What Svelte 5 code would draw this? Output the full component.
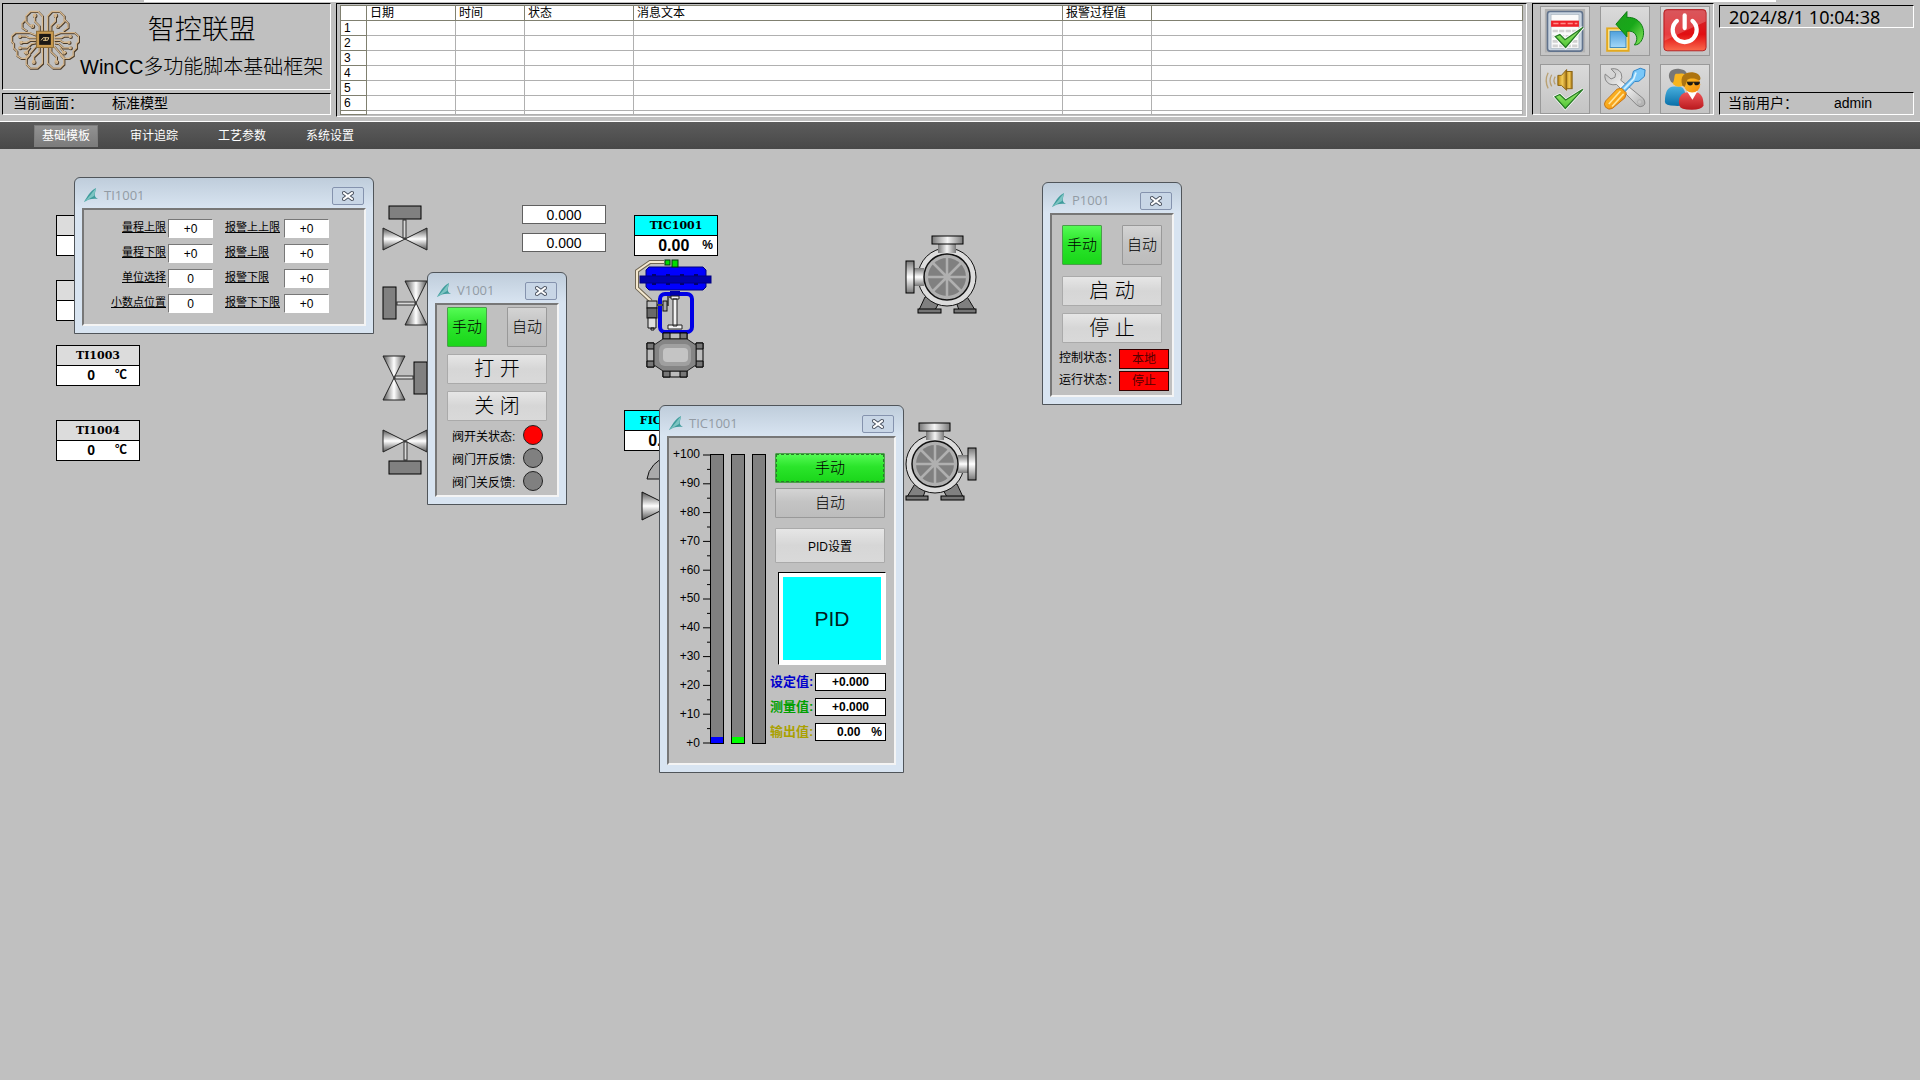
<script lang="ts">
	import type { Snippet } from 'svelte';

	type Mode = 'manual' | 'auto';

	const menu = ['基础模板', '审计追踪', '工艺参数', '系统设置'];
	const alarmRows = [1, 2, 3, 4, 5, 6];

	// the first two blocks lie under the TI1001 faceplate and stay blank
	const sensors = [
		{ tag: '', value: '', unit: '', x: 56, y: 66 },
		{ tag: '', value: '', unit: '', x: 56, y: 131 },
		{ tag: 'TI1003', value: '0', unit: '℃', x: 56, y: 196 },
		{ tag: 'TI1004', value: '0', unit: '℃', x: 56, y: 271 }
	];

	const controllers = [
		{ tag: 'TIC1001', x: 634, y: 66 },
		{ tag: 'FIC1001', x: 624, y: 261 }
	];

	const readouts = [
		{ id: 'out1', x: 522, y: 56 },
		{ id: 'out2', x: 522, y: 84 }
	];

	// angle turns the valve so that the actuator points up, left, right or down
	const valves = [
		{ x: 405, y: 90, angle: 0 },
		{ x: 416, y: 154, angle: -90 },
		{ x: 394, y: 229, angle: 90 },
		{ x: 405, y: 292, angle: 180 }
	];

	const limits = [
		{ id: 'range-hi', label: '量程上限', value: '+0' },
		{ id: 'alarm-hh', label: '报警上上限', value: '+0' },
		{ id: 'range-lo', label: '量程下限', value: '+0' },
		{ id: 'alarm-h', label: '报警上限', value: '+0' },
		{ id: 'unit', label: '单位选择', value: '0' },
		{ id: 'alarm-l', label: '报警下限', value: '+0' },
		{ id: 'decimals', label: '小数点位置', value: '0' },
		{ id: 'alarm-ll', label: '报警下下限', value: '+0' }
	];

	const scale = [100, 90, 80, 70, 60, 50, 40, 30, 20, 10, 0];
	const bars = [
		{ name: 'sp', fill: 2 },
		{ name: 'pv', fill: 2 },
		{ name: 'mv', fill: 0 }
	];
	const loopValues = [
		{ id: 'sp', label: '设定值:', value: '+0.000', unit: '' },
		{ id: 'pv', label: '测量值:', value: '+0.000', unit: '' },
		{ id: 'mv', label: '输出值:', value: '0.00', unit: '%' }
	];

	let activeMenu = $state('基础模板');
	let valveMode = $state<Mode>('manual');
	let pumpMode = $state<Mode>('manual');
	let loopMode = $state<Mode>('manual');
	let open = $state({ ti: true, valve: true, loop: true, pump: true });
</script>

{#snippet faceplate(key: 'ti' | 'valve' | 'loop' | 'pump', title: string, body: Snippet)}
	{#if open[key]}
		<section class="window window-{key}" aria-label={title}>
			<header class="title-bar">
				<svg class="app-icon" viewBox="0 0 14 15">
					<path d="M0 14 C3 9 6 3 12 0 L11 5 C10 8 12 10 14 11 C9 10 4 11 0 14Z" fill="#3f9c9c" />
					<path d="M0 14 C5 9 8 5 12 0 L10 8 Z" fill="#7cc4c2" />
				</svg>
				<h2>{title}</h2>
				<button class="close" aria-label="关闭窗口" onclick={() => (open[key] = false)}>
					<svg viewBox="0 0 12 10">
						<path d="M2 2 L10 8 M10 2 L2 8" stroke="#4a5260" stroke-width="4" stroke-linecap="square" />
						<path d="M2 2 L10 8 M10 2 L2 8" stroke="#fff" stroke-width="2" stroke-linecap="square" />
					</svg>
				</button>
			</header>
			<div class="window-body">{@render body()}</div>
		</section>
	{/if}
{/snippet}

{#snippet valve()}
	<path d="M-22 -11 L0 0 L-22 11Z M22 -11 L0 0 L22 11Z" fill="url(#steel)" stroke="#222" />
	<rect x="-2" y="-19" width="3" height="18" fill="#d8d8d8" stroke="#333" />
	<rect x="-16" y="-33" width="32" height="13" fill="#808080" stroke="#000" />
{/snippet}

{#snippet pump()}
	<path d="M20 62 L14 75 H30 L36 64Z M50 64 L54 75 H70 L61 60Z" fill="#808080" stroke="#111" />
	<rect x="13" y="74" width="23" height="4" fill="#757575" stroke="#000" />
	<rect x="49" y="74" width="22" height="4" fill="#757575" stroke="#000" />
	<circle cx="42" cy="42" r="29" fill="#dcdcdc" stroke="#111" />
	<rect x="33" y="9" width="18" height="9" fill="url(#flange)" />
	<rect x="9" y="33" width="10" height="18" fill="url(#flange-side)" />
	<rect x="27" y="1" width="31" height="8" fill="url(#flange)" stroke="#000" />
	<rect x="1" y="26" width="8" height="32" fill="url(#flange-side)" stroke="#000" />
	<circle cx="42" cy="42" r="23" fill="#b0b0b0" stroke="#111" stroke-width="1.5" />
	<circle cx="42" cy="42" r="19" fill="#808080" />
	<path d="M42 22 V62 M22 42 H62 M28 28 L56 56 M56 28 L28 56" stroke="#b0b0b0" stroke-width="2.5" />
{/snippet}

{#snippet limitPanel()}
	<div class="limits">
		{#each limits as item (item.id)}
			<label for={item.id}>{item.label}</label>
			<input id={item.id} value={item.value} />
		{/each}
	</div>
{/snippet}

{#snippet valvePanel()}
	<div class="commands valve-commands">
		<div class="modes">
			<button class="mode" class:on={valveMode === 'manual'} onclick={() => (valveMode = 'manual')}>手动</button>
			<button class="mode" class:on={valveMode === 'auto'} onclick={() => (valveMode = 'auto')}>自动</button>
		</div>
		<button class="action">打 开</button>
		<button class="action">关 闭</button>
	</div>
	<ul class="lamps">
		<li>阀开关状态: <span class="lamp red"></span></li>
		<li>阀门开反馈: <span class="lamp"></span></li>
		<li>阀门关反馈: <span class="lamp"></span></li>
	</ul>
{/snippet}

{#snippet pumpPanel()}
	<div class="commands pump-commands">
		<div class="modes">
			<button class="mode" class:on={pumpMode === 'manual'} onclick={() => (pumpMode = 'manual')}>手动</button>
			<button class="mode" class:on={pumpMode === 'auto'} onclick={() => (pumpMode = 'auto')}>自动</button>
		</div>
		<button class="action">启 动</button>
		<button class="action">停 止</button>
	</div>
	<dl class="states">
		<dt>控制状态：</dt>
		<dd>本地</dd>
		<dt>运行状态：</dt>
		<dd>停止</dd>
	</dl>
{/snippet}

{#snippet loopPanel()}
	<div class="loop">
		<div class="gauge">
			<ol class="scale">
				{#each scale as step (step)}
					<li>+{step}</li>
				{/each}
			</ol>
			<svg class="ticks" viewBox="0 0 7 290" preserveAspectRatio="none">
				{#each scale as step (step)}
					<path d="M0 {289 - step * 2.88} H7" stroke="#000" />
					{#if step > 0}
						<path d="M4 {289 - (step - 5) * 2.88} H7" stroke="#000" />
					{/if}
				{/each}
			</svg>
			<div class="bars">
				{#each bars as bar (bar.name)}
					<div class="bar"><div class="fill {bar.name}" style="height: {bar.fill}%"></div></div>
				{/each}
			</div>
		</div>
		<div class="loop-side">
			<button class="wide focused" class:on={loopMode === 'manual'} onclick={() => (loopMode = 'manual')}>手动</button>
			<button class="wide" class:on={loopMode === 'auto'} onclick={() => (loopMode = 'auto')}>自动</button>
			<button class="wide setup">PID设置</button>
			<div class="pid-box">PID</div>
			<div class="loop-values">
				{#each loopValues as item (item.id)}
					<label class={item.id} for="loop-{item.id}">{item.label}</label>
					<span class="value-box" class:with-unit={item.unit}>
						<input id="loop-{item.id}" value={item.value} />{item.unit}
					</span>
				{/each}
			</div>
		</div>
	</div>
{/snippet}

{#snippet brainHalf()}
	<path d="M128 95 V46 L115 32 H91 L77 46 V63 L90 76 H97" />
	<path d="M118 94 V76 L104 62 V40 M77 56 L65 68 V82 L80 92" />
	<path d="M108 105 L88 97 H45 L33 108 V125 L39 131 V145 L49 155 V168 L62 177 H75 L92 158 L108 139" />
	<path d="M108 113 H86 L77 108 H56 M108 121 H90 L80 127 H61" />
	<path d="M107 129 L94 131 L80 144 H56 M90 142 L78 158 H70" />
	<path d="M90 164 L78 178 V195 L90 207 H112 L128 192 V142" />
	<path d="M118 142 V156 L101 172 V190" />
	<circle cx="104" cy="44" r="4" /><circle cx="97" cy="77" r="4" /><circle cx="58" cy="109" r="3" />
	<circle cx="62" cy="127" r="3" /><circle cx="58" cy="144" r="3" /><circle cx="78" cy="159" r="4" />
	<circle cx="101" cy="188" r="4" />
{/snippet}

<div class="screen">
	<header class="top">
		<div class="brand-column">
			<div class="brand sunken">
				<svg class="logo" viewBox="28 26 216 188">
					<g class="brain shade" transform="translate(2 2)">
						{@render brainHalf()}
						<g transform="translate(272 0) scale(-1 1)">{@render brainHalf()}</g>
					</g>
					<g class="brain">
						{@render brainHalf()}
						<g transform="translate(272 0) scale(-1 1)">{@render brainHalf()}</g>
					</g>
					<rect x="110" y="93" width="52" height="50" fill="#c99a4e" stroke="#8a6a35" stroke-width="3" />
					<rect x="118" y="101" width="36" height="34" fill="#1c1915" />
					<path d="M124 121 L130 113 H148 L144 121 H130 M137 112 V122" stroke="#e8c98c" stroke-width="3" fill="none" />
				</svg>
				<div class="brand-text">
					<h1>智控联盟</h1>
					<p>WinCC多功能脚本基础框架</p>
				</div>
			</div>
			<div class="current sunken"><span>当前画面：</span><span>标准模型</span></div>
		</div>

		<div class="alarms sunken">
			<table>
				<colgroup>
					<col class="c-no" /><col class="c-date" /><col class="c-time" /><col class="c-state" />
					<col class="c-text" /><col class="c-value" /><col />
				</colgroup>
				<thead>
					<tr>
						<th></th><th>日期</th><th>时间</th><th>状态</th><th>消息文本</th><th>报警过程值</th><th></th>
					</tr>
				</thead>
				<tbody>
					{#each alarmRows as no (no)}
						<tr><td>{no}</td><td></td><td></td><td></td><td></td><td></td><td></td></tr>
					{/each}
					<tr class="rest"><td></td><td></td><td></td><td></td><td></td><td></td><td></td></tr>
				</tbody>
			</table>
		</div>

		<div class="tools sunken">
			<button aria-label="报警确认">
				<svg viewBox="0 0 148 148">
					<rect x="12" y="6" width="124" height="134" fill="#b3b3b3" />
					<rect x="20" y="14" width="108" height="122" rx="8" fill="#c8d3df" stroke="#61738d" stroke-width="5" />
					<rect x="31" y="23" width="86" height="105" fill="#fafafa" stroke="#a7b2be" stroke-width="2" />
					<path d="M36 74 H112 M36 90 H112 M36 106 H112 M36 120 H112" stroke="#d2d2d2" stroke-width="8" />
					<path d="M54 68 V126 M74 68 V126 M94 68 V126" stroke="#fafafa" stroke-width="4" />
					<rect x="31" y="42" width="86" height="19" fill="#ee2028" />
					<path d="M38 51 H54 M60 51 H76 M82 51 H98 M104 51 H112" stroke="#ff8b88" stroke-width="5" />
					<path d="M44 91 L58 85 L74 101 L129 63 L76 125Z" fill="#72d84d" stroke="#fff" stroke-width="9" />
					<path d="M44 91 L58 85 L74 101 L129 63 L76 125Z" fill="url(#check)" stroke="#267a24" stroke-width="4" />
				</svg>
			</button>
			<button aria-label="画面返回">
				<svg viewBox="0 0 148 148">
					<rect x="19" y="66" width="66" height="69" fill="#ffe89a" stroke="#e3a91e" stroke-width="6" />
					<rect x="28" y="75" width="49" height="50" fill="url(#sky)" stroke="#3c88bd" stroke-width="3" />
					<path d="M46 53 L80 14 V32 C120 30 138 66 129 94 C123 112 113 117 103 117 C120 96 106 70 80 75 V92Z" fill="url(#leaf)" stroke="#0c7a13" stroke-width="3" />
				</svg>
			</button>
			<button aria-label="退出">
				<svg viewBox="0 0 148 148">
					<rect x="9" y="8" width="130" height="127" rx="10" fill="url(#power)" stroke="#b42326" stroke-width="3" />
					<path d="M11 18 Q12 9 20 10 H128 Q138 10 138 22 V45 Q78 72 11 104Z" fill="#fff" opacity=".2" />
					<path d="M49 43 A37 37 0 1 0 97 43" fill="none" stroke="#fff" stroke-width="13" stroke-linecap="round" />
					<path d="M73 26 V65" stroke="#fff" stroke-width="13" stroke-linecap="round" />
				</svg>
			</button>
			<button aria-label="消音">
				<svg viewBox="0 0 148 148">
					<path d="M22 24 Q10 48 22 72 M33 30 Q23 48 33 66 M44 36 Q36 48 44 60" fill="none" stroke="#b9a173" stroke-width="4" />
					<path d="M52 32 H63 L79 14 V78 L63 63 H52Z" fill="url(#brass)" stroke="#8a6415" stroke-width="3" />
					<rect x="78" y="20" width="18" height="53" fill="url(#brass)" stroke="#8a6415" stroke-width="3" />
					<path d="M43 98 L58 91 L76 108 L129 75 L75 134Z" fill="#fff" stroke="#fff" stroke-width="8" />
					<path d="M43 98 L58 91 L76 108 L129 75 L75 134Z" fill="url(#check)" stroke="#267a24" stroke-width="4" />
				</svg>
			</button>
			<button aria-label="工具">
				<svg viewBox="0 0 148 148">
					<path d="M31 12 Q52 8 62 25 Q67 39 61 47 L131 104 Q140 120 130 126 Q121 133 110 123 L48 60 Q24 65 14 46 Q10 35 13 28 L31 43 L43 38 L45 27Z" fill="url(#wrench)" stroke="#858585" stroke-width="3" />
					<circle cx="119" cy="114" r="7" fill="#c6c6c6" stroke="#999" />
					<path d="M61 73 L95 39 L100 19 L121 10 L136 15 L134 35 L117 50 L104 51 L73 83Z" fill="#79c7f8" stroke="#2c83c5" stroke-width="3" />
					<path d="M71 74 L101 43 L108 23" stroke="#d8f3ff" stroke-width="5" fill="none" />
					<path d="M50 74 L64 72 L78 86 L74 101 L35 134 Q24 140 14 130 Q7 121 14 111Z" fill="url(#orange)" stroke="#c57518" stroke-width="3" />
					<path d="M24 120 L60 80 M34 128 L70 89" stroke="#ffe49a" stroke-width="5" />
				</svg>
			</button>
			<button aria-label="用户登录">
				<svg viewBox="0 0 148 148">
					<path d="M12 113 Q12 64 42 66 H59 Q79 71 76 113 Q70 129 43 126 Q12 125 12 113Z" fill="url(#blue-coat)" />
					<circle cx="55" cy="44" r="23" fill="#f8b51e" />
					<path d="M28 46 C15 20 39 8 58 12 C77 15 82 25 78 31 C66 23 54 28 46 27 C40 29 42 48 37 55 Q31 56 28 46Z" fill="#777" />
					<path d="M55 114 Q56 84 84 84 H104 Q132 84 131 126 Q124 138 95 138 Q59 138 57 126Z" fill="url(#red-coat)" />
					<path d="M80 81 L97 107 L113 80Z" fill="#fff" />
					<circle cx="96" cy="60" r="25" fill="url(#orange)" />
					<path d="M66 64 C55 29 80 20 101 23 C119 26 126 40 119 48 C104 38 88 41 82 45 L73 68Z" fill="#ad7410" />
					<path d="M80 53 H120" stroke="#161616" stroke-width="3" />
					<path d="M80 53 H98 V59 Q90 68 82 59Z M102 53 H119 V58 Q110 67 103 59Z" fill="#161616" />
				</svg>
			</button>
		</div>

		<div class="session">
			<time class="clock sunken" datetime="2024-08-01T10:04:38">2024/8/1 10:04:38</time>
			<div class="user sunken"><span>当前用户：</span><span>admin</span></div>
		</div>
	</header>

	<nav>
		{#each menu as item (item)}
			<button class:active={activeMenu === item} onclick={() => (activeMenu = item)}>{item}</button>
		{/each}
	</nav>

	<main>
		<svg class="process" width="1000" height="380" viewBox="0 0 1000 380">
			<defs>
				<linearGradient id="steel" x1="0" y1="0" x2="0" y2="1">
					<stop offset="0" stop-color="#555" /><stop offset=".5" stop-color="#fff" /><stop offset="1" stop-color="#555" />
				</linearGradient>
				<linearGradient id="flange" x1="0" y1="0" x2="1" y2="0">
					<stop offset="0" stop-color="#777" /><stop offset=".5" stop-color="#f4f4f4" /><stop offset="1" stop-color="#777" />
				</linearGradient>
				<linearGradient id="flange-side" x1="0" y1="0" x2="0" y2="1">
					<stop offset="0" stop-color="#777" /><stop offset=".5" stop-color="#fff" /><stop offset="1" stop-color="#777" />
				</linearGradient>
				<linearGradient id="check" x1="0" y1="0" x2="0" y2="1">
					<stop offset="0" stop-color="#a9f07c" /><stop offset="1" stop-color="#4cc431" />
				</linearGradient>
				<linearGradient id="sky" x1="0" y1="0" x2="0" y2="1">
					<stop offset="0" stop-color="#4fa0dc" /><stop offset="1" stop-color="#a4d8f8" />
				</linearGradient>
				<linearGradient id="leaf" x1="0" y1="0" x2="1" y2="1">
					<stop offset="0" stop-color="#1d9f1c" /><stop offset=".5" stop-color="#18a819" /><stop offset="1" stop-color="#8de85f" />
				</linearGradient>
				<linearGradient id="power" x1="0" y1="0" x2="0" y2="1">
					<stop offset="0" stop-color="#cf2e35" /><stop offset=".6" stop-color="#e20e12" /><stop offset="1" stop-color="#fa6a4c" />
				</linearGradient>
				<linearGradient id="brass" x1="0" y1="0" x2="1" y2="0">
					<stop offset="0" stop-color="#b98414" /><stop offset=".5" stop-color="#f3cd5a" /><stop offset="1" stop-color="#a87312" />
				</linearGradient>
				<linearGradient id="wrench" x1="0" y1="0" x2="1" y2="1">
					<stop offset="0" stop-color="#bcbcbc" /><stop offset=".5" stop-color="#f6f6f6" /><stop offset="1" stop-color="#aaa" />
				</linearGradient>
				<linearGradient id="orange" x1="0" y1="0" x2="1" y2="1">
					<stop offset="0" stop-color="#ffc52a" /><stop offset="1" stop-color="#f28a0c" />
				</linearGradient>
				<linearGradient id="blue-coat" x1="0" y1="0" x2="0" y2="1">
					<stop offset="0" stop-color="#49b0df" /><stop offset="1" stop-color="#096fa8" />
				</linearGradient>
				<linearGradient id="red-coat" x1="0" y1="0" x2="0" y2="1">
					<stop offset="0" stop-color="#ef5558" /><stop offset="1" stop-color="#b9181d" />
				</linearGradient>
			</defs>

			{#each valves as v}
				<g transform="translate({v.x} {v.y}) rotate({v.angle})">{@render valve()}</g>
			{/each}

			<!-- pneumatic control valve -->
			<g transform="translate(634 109)">
				<path d="M30 4 H16 L3 13 V30 L17 43" fill="none" stroke="#6f6654" stroke-width="4" />
				<path d="M30 4 H16 L3 13 V30 L17 43" fill="none" stroke="#f4e8cf" stroke-width="2" />
				<rect x="26" y="36" width="32" height="38" rx="5" fill="none" stroke="#0000e6" stroke-width="4" />
				<path d="M23 47 H34 V39 H39" fill="none" stroke="#555" stroke-width="2" />
				<rect x="29" y="43" width="4" height="10" fill="#aaa" stroke="#111" />
				<rect x="13" y="43" width="10" height="7" fill="#bbb" stroke="#111" />
				<rect x="13" y="50" width="10" height="10" fill="#696969" stroke="#111" />
				<path d="M14 60 H22 V70 H14Z M17 70 H20 V72 H17Z" fill="#ddd" stroke="#111" />
				<path d="M15 9 H69 L72 12 V29 L69 32 H15 L12 29 V12Z" fill="#00f" stroke="#000080" />
				<rect x="6" y="18" width="71" height="7" fill="#0000a8" stroke="#000080" />
				<path d="M18 17 h4 M32 17 h4 M46 17 h4 M60 17 h4 M18 26 h4 M32 26 h4 M46 26 h4 M60 26 h4" stroke="#000070" stroke-width="2" />
				<rect x="31" y="2" width="5" height="5" fill="#0d0" stroke="#031" />
				<rect x="38" y="2" width="6" height="7" fill="#0d0" stroke="#031" />
				<rect x="36" y="33" width="10" height="5" fill="#0000b0" />
				<path d="M37 38 H45 V41 H37Z M39 41 H43 V68 H39Z M34 67 H48 V71 H34Z" fill="#f2f2f2" stroke="#222" />
				<path d="M29 75 H53 V81 H29Z M29 113 H53 V119 H29Z M13 85 H20 V109 H13Z M62 85 H69 V109 H62Z" fill="#bdbdbd" stroke="#000" />
				<path d="M29 75 h7 v6 h-7z M46 75 h7 v6 h-7z M29 113 h7 v6 h-7z M46 113 h7 v6 h-7z M13 85 h7 v6 h-7z M13 103 h7 v6 h-7z M62 85 h7 v6 h-7z M62 103 h7 v6 h-7z" fill="#777" stroke="#000" />
				<path d="M29 81 H53 L62 87 V107 L53 113 H29 L20 107 V87Z" fill="#858585" stroke="#222" />
				<rect x="25" y="86" width="32" height="22" rx="6" fill="#a0a0a0" />
				<rect x="29" y="90" width="25" height="14" rx="4" fill="#c4c4c4" />
			</g>

			<!-- flow control valve -->
			<path d="M647 330 Q649 314 670 305 Q690 314 692 330Z" fill="#aaa" stroke="#111" />
			<path d="M642 343 L670 357 L642 371Z" fill="url(#steel)" stroke="#111" />

			<g transform="translate(905 86)">{@render pump()}</g>
			<g transform="translate(977 273) scale(-1 1)">{@render pump()}</g>
		</svg>

		{#each sensors as s}
			<div class="tag sensor" style="left: {s.x}px; top: {s.y}px">
				<h3>{s.tag}</h3>
				<p><b>{s.value}</b><span>{s.unit}</span></p>
			</div>
		{/each}

		{#each controllers as c (c.tag)}
			<div class="tag controller" style="left: {c.x}px; top: {c.y}px">
				<h3>{c.tag}</h3>
				<p><b>0.00</b><span>%</span></p>
			</div>
		{/each}

		{#each readouts as r (r.id)}
			<input class="readout" aria-label={r.id} value="0.000" style="left: {r.x}px; top: {r.y}px" />
		{/each}

		{@render faceplate('ti', 'TI1001', limitPanel)}
		{@render faceplate('valve', 'V1001', valvePanel)}
		{@render faceplate('loop', 'TIC1001', loopPanel)}
		{@render faceplate('pump', 'P1001', pumpPanel)}
	</main>
</div>

<style>
	:global(body) {
		background: #c0c0c0;
	}

	.screen {
		display: flex;
		flex-direction: column;
		min-height: 100vh;
		background: #c0c0c0;
		color: #000;
		font-family: 'Liberation Sans', 'Noto Sans CJK SC', sans-serif;
		font-size: 12px;
	}

	.screen *,
	.screen {
		box-sizing: border-box;
	}

	h1,
	h2,
	h3,
	p,
	ul,
	ol,
	dl,
	dd {
		margin: 0;
		padding: 0;
		font-weight: inherit;
		list-style: none;
	}

	button,
	input {
		margin: 0;
		padding: 0;
		color: inherit;
		font-family: inherit;
		border-radius: 0;
	}

	.sunken {
		border: 1px solid;
		border-color: #000 #fff #fff #000;
	}

	/* Header */
	.top {
		display: grid;
		grid-template-columns: 329px 1fr 182px 195px;
		gap: 5px;
		padding: 3px 6px 4px 2px;
		background: linear-gradient(#fff, #fff) 144px 0 / calc(100% - 288px) 2px no-repeat;
	}

	.brand-column {
		display: flex;
		flex-direction: column;
		gap: 3px;
	}

	.brand {
		display: flex;
		height: 87px;
		font-weight: 300;
	}

	.logo {
		flex: none;
		width: 70px;
		height: 64px;
		margin: 4px 0 0 7px;
	}

	.brain {
		fill: none;
		stroke: #d6b88f;
		stroke-width: 4;
	}

	.brain.shade {
		stroke: #4a3a28;
		stroke-width: 6;
	}

	.brand-text {
		text-align: center;
		white-space: nowrap;
	}

	h1 {
		padding-top: 8px;
		font-size: 27px;
		line-height: 36px;
	}

	.brand-text p {
		font-size: 20px;
		line-height: 38px;
	}

	.current {
		display: flex;
		gap: 29px;
		height: 22px;
		padding-left: 10px;
		font-size: 14px;
		line-height: 18px;
	}

	.alarms {
		padding: 1px 3px;
	}

	table {
		width: 100%;
		table-layout: fixed;
		border-collapse: collapse;
		border: 1px solid #808070;
		background: #fff;
	}

	.c-no { width: 26px; }
	.c-date { width: 89px; }
	.c-time { width: 69px; }
	.c-state { width: 109px; }
	.c-text { width: 429px; }
	.c-value { width: 89px; }

	th,
	td {
		height: 15px;
		padding: 0 0 0 3px;
		border: 1px solid #b0b0b0;
		font-weight: inherit;
		font-size: 12px;
		line-height: 14px;
		text-align: left;
		white-space: nowrap;
	}

	th,
	td:first-child {
		border-color: #808070;
	}

	.rest td {
		height: 4px;
	}

	.tools {
		display: grid;
		grid-template-columns: repeat(3, 50px);
		grid-auto-rows: 50px;
		gap: 8px 10px;
		align-self: start;
		padding: 2px 0 0 7px;
	}

	.tools button {
		border: 1px solid #999;
		background: linear-gradient(#dadada, #c4c4c4);
	}

	.tools svg {
		display: block;
		width: 48px;
		height: 48px;
	}

	.session {
		display: flex;
		flex-direction: column;
		justify-content: space-between;
		padding: 2px 0;
	}

	.clock {
		height: 23px;
		padding-left: 9px;
		font-family: 'Noto Sans', sans-serif;
		font-size: 18px;
		line-height: 22px;
	}

	.user {
		display: flex;
		gap: 36px;
		height: 23px;
		padding-left: 8px;
		font-size: 14px;
		line-height: 20px;
	}

	/* Menu */
	nav {
		display: flex;
		gap: 24px;
		padding: 3px 34px 2px;
		border-top: 1px solid #fff;
		background: linear-gradient(#5c5c5c, #484848);
	}

	nav button {
		height: 22px;
		padding: 0 7px;
		border: 1px solid transparent;
		background: none;
		color: #fff;
		font-size: 12px;
		line-height: 20px;
	}

	nav button.active {
		border-color: #7d7d7d;
		background: linear-gradient(#929292, #7c7c7c);
	}

	/* Process picture */
	main {
		position: relative;
		flex: 1;
	}

	.process {
		position: absolute;
		top: 0;
		left: 0;
	}

	.tag {
		position: absolute;
		width: 84px;
		border: 1px solid #000;
		background: #fff;
	}

	.tag h3 {
		min-height: 20px;
		border-bottom: 1px solid #000;
		background: #dcdcdc;
		font-family: 'DejaVu Serif', serif;
		font-size: 11px;
		font-weight: bold;
		line-height: 19px;
		text-align: center;
	}

	.tag.controller h3 {
		background: #0ff;
	}

	.tag p {
		display: flex;
		justify-content: flex-end;
		gap: 20px;
		min-height: 19px;
		padding-right: 12px;
		font-size: 14px;
		font-weight: bold;
		line-height: 19px;
	}

	.tag.controller p {
		gap: 13px;
		padding-right: 4px;
		font-size: 16px;
	}

	.tag p span {
		font-size: 12px;
	}

	.readout {
		position: absolute;
		width: 84px;
		height: 19px;
		border: 1px solid #606060;
		background: #fff;
		font-size: 14px;
		text-align: center;
	}

	/* Faceplate windows */
	.window {
		position: absolute;
		padding: 0 7px 7px;
		border: 1px solid #50555a;
		border-radius: 6px 6px 0 0;
		background: linear-gradient(#bfcddb, #d8e4f1 30px);
	}

	.window-ti {
		top: 28px;
		left: 74px;
		width: 300px;
	}

	.window-valve {
		top: 123px;
		left: 427px;
		width: 140px;
	}

	.window-loop {
		top: 256px;
		left: 659px;
		width: 245px;
	}

	.window-pump {
		top: 33px;
		left: 1042px;
		width: 140px;
	}

	.title-bar {
		display: flex;
		align-items: center;
		gap: 6px;
		height: 30px;
		padding: 5px 2px 0;
	}

	.app-icon {
		width: 14px;
		height: 15px;
	}

	h2 {
		flex: 1;
		color: #929ba4;
		font-family: 'Open Sans', sans-serif;
		font-size: 13px;
		line-height: 17px;
	}

	.close {
		display: flex;
		align-items: center;
		justify-content: center;
		width: 32px;
		height: 18px;
		border: 1px solid #8593ae;
		border-radius: 2px;
		background: #c8d6e6;
	}

	.close svg {
		width: 12px;
		height: 10px;
	}

	.window-body {
		border: 2px solid;
		border-color: #777 #f4f4f4 #f4f4f4 #777;
		background: #c0c0c0;
	}

	.limits {
		display: grid;
		grid-template-columns: 84px 45px 71px 45px;
		gap: 6px 0;
		padding: 9px 0 11px;
		font-size: 11px;
		line-height: 17px;
	}

	.limits label {
		text-decoration: underline;
		white-space: nowrap;
	}

	.limits label:nth-of-type(odd) {
		padding-right: 2px;
		text-align: right;
	}

	.limits label:nth-of-type(even) {
		padding-left: 12px;
	}

	.limits input {
		width: 45px;
		height: 19px;
		border: 1px solid;
		border-color: #777 #fff #fff #777;
		background: #fff;
		font-size: 12px;
		text-align: center;
	}

	.commands {
		display: flex;
		flex-direction: column;
		gap: 7px;
	}

	.valve-commands {
		padding: 2px 10px 4px;
	}

	.pump-commands {
		padding: 10px 10px 6px;
	}

	.modes {
		display: flex;
		justify-content: space-between;
	}

	.pump-commands .modes {
		padding-bottom: 4px;
	}

	.mode,
	.action,
	.wide {
		padding-bottom: 3px;
		border: 1px solid #999;
		border-radius: 1px;
		background: linear-gradient(#d4d4d4, #c4c4c4 45%, #bcbcbc);
		font-size: 15px;
		font-weight: 300;
	}

	.mode {
		width: 40px;
		height: 40px;
	}

	.mode.on,
	.wide.on {
		border-color: #4a9f4a;
		background: linear-gradient(#55fb55, #2be52b 45%, #1ad61a);
	}

	.action,
	.wide.setup {
		border-color: #aaa;
		background: linear-gradient(#e6e6e6, #d6d6d6 50%, #d9d9d9);
	}

	.action {
		height: 30px;
		padding: 0;
		font-size: 20px;
		line-height: 28px;
	}

	.lamps {
		display: flex;
		flex-direction: column;
		gap: 3px;
		padding: 0 14px 4px 15px;
	}

	.lamps li {
		display: flex;
		align-items: center;
		justify-content: space-between;
		height: 20px;
		white-space: nowrap;
	}

	.lamp {
		width: 20px;
		height: 20px;
		border: 1px solid #222;
		border-radius: 50%;
		background: #808080;
	}

	.lamp.red {
		background: #f00;
	}

	.states {
		display: grid;
		grid-template-columns: 1fr 50px;
		gap: 2px 0;
		padding: 0 5px 4px 7px;
		line-height: 18px;
		white-space: nowrap;
	}

	.states dd {
		height: 20px;
		border: 1px solid #300;
		background: #f00;
		color: #500;
		text-align: center;
	}

	/* Control loop */
	.loop {
		display: flex;
		justify-content: space-between;
		padding: 9px 8px 12px 2px;
	}

	.gauge {
		display: flex;
		height: 304px;
	}

	.scale {
		display: flex;
		flex-direction: column;
		justify-content: space-between;
		width: 29px;
		font-size: 12px;
		line-height: 15px;
		text-align: right;
	}

	.ticks {
		width: 7px;
		height: 290px;
		margin: 7px 0 0 3px;
	}

	.bars {
		display: flex;
		gap: 7px;
		padding: 7px 0;
	}

	.bar {
		display: flex;
		align-items: flex-end;
		width: 14px;
		height: 290px;
		border: 1px solid #000;
		background: #808080;
	}

	.fill {
		width: 100%;
	}

	.fill.sp {
		background: #00f;
	}

	.fill.pv {
		background: #0f0;
	}

	.loop-side {
		display: flex;
		flex-direction: column;
		width: 116px;
		padding: 6px 0 0;
	}

	.wide {
		height: 30px;
		margin: 0 1px 5px 5px;
	}

	.wide.focused {
		outline: 1px dashed #2b7a2b;
		outline-offset: -2px;
	}

	.wide.setup {
		height: 35px;
		margin-top: 5px;
		margin-bottom: 9px;
		padding: 0;
		font-size: 12px;
		font-weight: 400;
	}

	.pid-box {
		height: 93px;
		margin: 0 0 8px 8px;
		border: 1px solid;
		border-color: #000 #fff #fff #000;
		outline: 4px solid #fff;
		outline-offset: -5px;
		background: #0ff;
		color: #002020;
		font-size: 21px;
		line-height: 91px;
		text-align: center;
	}

	.loop-values {
		display: grid;
		grid-template-columns: 1fr 71px;
		gap: 7px 0;
		font-weight: bold;
		line-height: 18px;
		white-space: nowrap;
	}

	.loop-values label {
		font-size: 13px;
	}

	label.sp {
		color: #00c;
	}

	label.pv {
		color: #00a000;
	}

	label.mv {
		color: #aaa000;
	}

	.value-box {
		display: flex;
		height: 18px;
		border: 1px solid #000;
		background: #fff;
		line-height: 16px;
	}

	.value-box.with-unit {
		padding: 0 3px 0 10px;
	}

	.value-box input {
		width: 100%;
		min-width: 0;
		border: 0;
		background: none;
		font-size: 12px;
		font-weight: bold;
		text-align: center;
	}
</style>
